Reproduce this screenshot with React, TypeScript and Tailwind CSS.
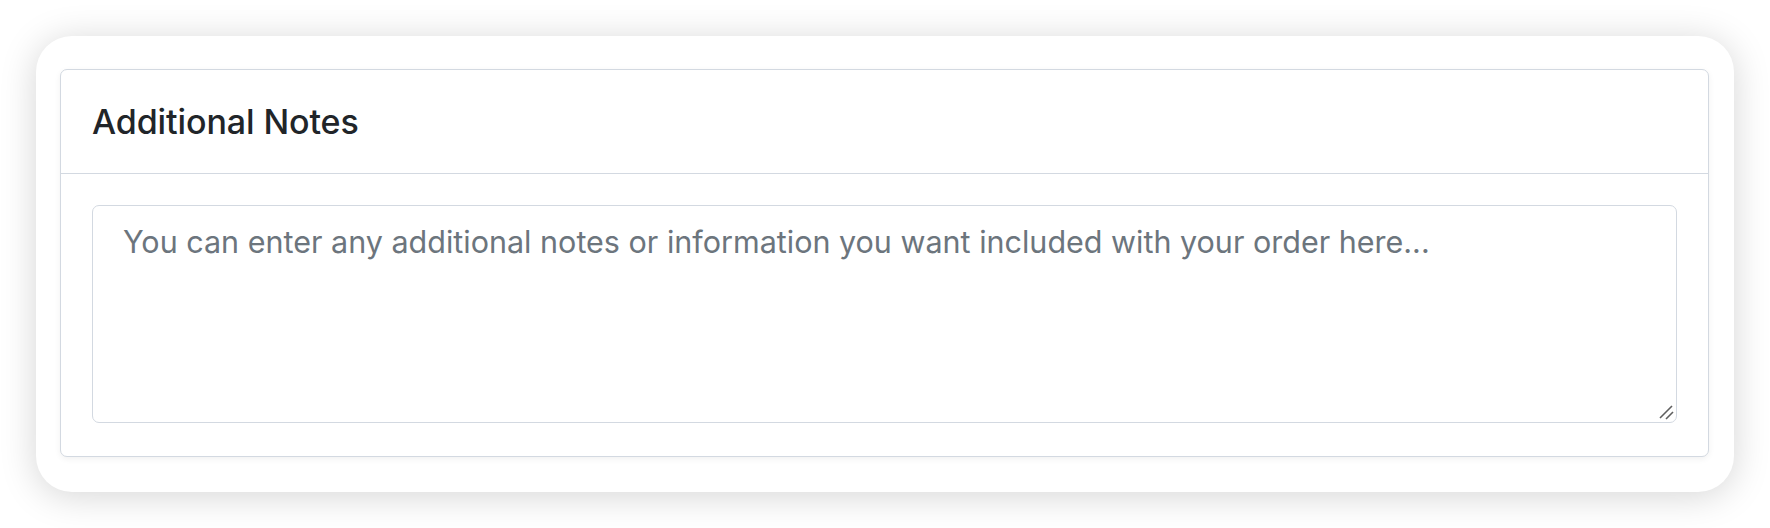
import React from "react";

export default function App() {
  return (
    <div
      className="w-[1770px] h-[528px] bg-white pt-[36px] pl-[36px]"
      style={{ fontFamily: "Inter, 'Noto Sans', sans-serif" }}
    >
      <div className="w-[1698px] h-[456px] rounded-[36px] bg-white shadow-[0_4px_36px_rgba(0,0,0,0.17)] pt-[33px] pl-[24px]">
        <div className="w-[1649px] h-[388px] rounded-[7px] border border-[#d3d9e1] bg-white shadow-[0_2px_6px_rgba(0,0,0,0.06)] flex flex-col">
          <div className="h-[104px] border-b border-[#d3d9e1] flex items-center px-[31px]">
            <h5 className="text-[34px] font-medium text-[#212529] tracking-[-0.1px]">Additional Notes</h5>
          </div>
          <div className="flex-1 px-[31px] pt-[31px]">
            <div className="relative w-[1585px] h-[218px]">
              <textarea
                className="block w-full h-full resize-none rounded-[7px] border border-[#d3d9e1] px-[30px] pt-[13px] text-[30.5px] leading-[1.5] text-[#212529] placeholder:text-[#6c757d] outline-none"
                style={{ fontFamily: "Inter, 'Noto Sans', sans-serif" }}
                placeholder="You can enter any additional notes or information you want included with your order here..."
              />
              <svg
                className="absolute right-[3px] bottom-[3px] pointer-events-none"
                width="16"
                height="16"
                viewBox="0 0 16 16"
              >
                <path d="M2 14 L14 2" stroke="#5f5f5f" strokeWidth="1.6" strokeLinecap="butt" />
                <path d="M8 15 L15 8" stroke="#5f5f5f" strokeWidth="1.6" strokeLinecap="butt" />
              </svg>
            </div>
          </div>
        </div>
      </div>
    </div>
  );
}
